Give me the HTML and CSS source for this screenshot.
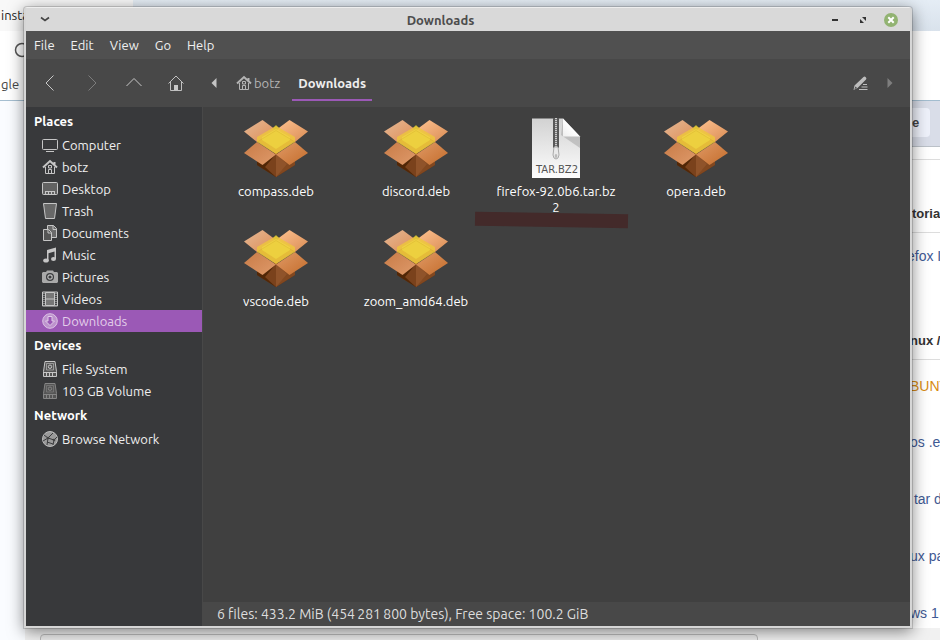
FILE: index.html
```
<!DOCTYPE html>
<html lang="en">
<head>
<meta charset="utf-8">
<title>Downloads</title>
<link rel="stylesheet" href="styles.css">
</head>
<body>
<svg class="defs" aria-hidden="true">
  <defs>
    <linearGradient id="flapA" x1="0" y1="0" x2="1" y2="1"><stop offset="0" stop-color="#e5b894"/><stop offset="1" stop-color="#dd8d57"/></linearGradient>
    <linearGradient id="flapB" x1="0" y1="0" x2="1" y2="1"><stop offset="0" stop-color="#ffc391"/><stop offset="1" stop-color="#d98c54"/></linearGradient>
    <linearGradient id="flapC" x1="0" y1="0" x2="1" y2="1"><stop offset="0" stop-color="#c87b47"/><stop offset="1" stop-color="#df9a6a"/></linearGradient>
    <linearGradient id="flapD" x1="0" y1="0" x2="1" y2="1"><stop offset="0" stop-color="#e09a66"/><stop offset="1" stop-color="#c46d2c"/></linearGradient>
    <linearGradient id="paper" x1="0" y1="0" x2="0" y2="1"><stop offset="0" stop-color="#d2d2d2"/><stop offset="1" stop-color="#fdfdfd"/></linearGradient>
    <linearGradient id="fold" x1="1" y1="0" x2="0" y2="1"><stop offset="0" stop-color="#a8a8a8"/><stop offset=".5" stop-color="#ffffff"/><stop offset="1" stop-color="#eeeeee"/></linearGradient>
  </defs>
  <symbol id="house" viewBox="0 0 16 16"><path d="M1 8.500 8 2l7 6.500M12.500 3v2.500" fill="none" stroke="currentColor" stroke-width="2"/><path d="M3.500 8v6.500h9V8M6.500 14.500v-4h3v4M6.500 6.500h3v2.500h-3z" fill="none" stroke="currentColor"/></symbol>
  <symbol id="drive" viewBox="0 0 16 16"><path d="M3 .5h10l1.500 10v5h-13v-5z" fill="#555" stroke="currentColor"/><path d="M1.500 11.500h13M4.500 12v3M7.500 12v3M10.500 12v3" fill="none" stroke="currentColor"/><path d="M4.500 2.500h7v6.500h-7z" fill="none" stroke="currentColor" opacity=".6"/><circle cx="8" cy="5.700" r="1.700" fill="none" stroke="currentColor"/></symbol>
  <symbol id="package" viewBox="0 -1 64 60">
    <path d="M13 34h38v12L32 58 13 46z" fill="#6c3512"/>
    <path d="M13 34l19 1v23L13 46z" fill="#512707"/><path d="M32 35 21 48l11 10z" fill="#7a421c"/><path d="M32 35l19-1v12L32 58z" fill="#824820"/><path d="M32 35l11 10-11 13z" fill="#8f532a"/>
    <path d="M13 22 32 10l19 12-19 13z" fill="#c08b38"/>
    <path d="M0 12.500 18.500 1 32 11 13 23z" fill="url(#flapA)"/>
    <path d="M32 11 45.500 1 64 12.500 51 23z" fill="url(#flapB)"/>
    <path d="M0 34 13 23l19 12.500L18.500 46z" fill="url(#flapC)"/>
    <path d="M64 34 51 23 32 35.500 45.500 46z" fill="url(#flapD)"/>
    <path d="M29 9l3-3 3 3-3 3z" fill="#b5ae31"/>
    <path d="M13 18 32 7l19 11v5L32 35 13 23z" fill="#eec83a" opacity=".8"/>
    <path d="M18 18 32 10l14 8v3l-14 9-14-9z" fill="#efd742" opacity=".75"/>
    <path d="M13 23 32 11.500 51 23" fill="none" stroke="#d5a52d" opacity=".35"/>
  </symbol>
</svg>

<div class="page">
  <div class="tabstrip"><span class="tab">insta</span></div>
  <div class="columns">
    <section class="left">
      <div class="addr"><svg width="16" height="16" viewBox="0 0 16 16"><circle cx="8" cy="8" r="6.500" fill="none" stroke="#555" stroke-width="1.500"/></svg></div>
      <div class="bookmarks">gle</div>
    </section>
    <section class="right">
      <div class="blank"></div>
      <div class="band"><button class="chip" type="button">e</button></div>
      <div class="rule"></div>
      <h2 class="first">toria</h2>
      <a href="#" class="top">efox I</a>
      <h2 class="second">nux /</h2>
      <a href="#" class="orange">BUNT</a>
      <a href="#">os .e</a>
      <a href="#">&nbsp;tar d</a>
      <a href="#">ux pa</a>
      <a href="#">ws 1</a>
    </section>
  </div>
  <div class="lower"><div class="panel"></div></div>
</div>

<main class="window">
  <header class="titlebar">
    <button class="wmenu" type="button" aria-label="Window menu"><svg width="10" height="8" viewBox="0 0 10 8"><path d="M1 1.500 5 4.500l4-3" fill="none" stroke="#444" stroke-width="1.600"/></svg></button>
    <h1>Downloads</h1>
    <button type="button" aria-label="Minimize"><svg width="8" height="8" viewBox="0 0 8 8"><path d="M1 3h6v2H1z" fill="#333"/></svg></button>
    <button type="button" aria-label="Maximize"><svg width="8" height="8" viewBox="0 0 8 8"><path d="M3 1h4v4zM1 3l4 4H1z" fill="#333"/></svg></button>
    <button type="button" aria-label="Close"><svg width="14" height="14" viewBox="0 0 14 14"><circle cx="7" cy="7" r="7" fill="#92b372"/><path d="M4.300 4.300l5.400 5.400M9.700 4.300 4.300 9.700" stroke="#fff" stroke-width="2"/></svg></button>
  </header>
  <nav class="menubar">
    <button type="button">File</button><button type="button">Edit</button><button type="button">View</button><button type="button">Go</button><button type="button">Help</button>
  </nav>
  <div class="toolbar">
    <button class="tool" type="button" aria-label="Back"><svg width="18" height="18" viewBox="0 0 18 18"><path d="M12.500 1.500 5 9l7.500 7.500" fill="none" stroke="#c8c8c8"/></svg></button>
    <button class="tool" type="button" aria-label="Forward"><svg width="18" height="18" viewBox="0 0 18 18"><path d="M5.500 1.500 13 9l-7.500 7.500" fill="none" stroke="#7d7d7d"/></svg></button>
    <button class="tool" type="button" aria-label="Up"><svg width="18" height="18" viewBox="0 0 18 18"><path d="M1.500 12 9 4.500l7.500 7.500" fill="none" stroke="#c8c8c8"/></svg></button>
    <button class="tool" type="button" aria-label="Home"><svg width="16" height="16" viewBox="0 0 16 16"><path d="M.5 8.500 8 1l7.500 7.500M2.500 7v8.500h11V7" fill="none" stroke="#c0c0c0"/><path d="M6 15v-5h4v5z" fill="#c8c8c8"/></svg></button>
    <button class="step" type="button" aria-label="Previous folders"><svg width="6" height="10" viewBox="0 0 6 10"><path d="M5.500 0v10L.5 5z" fill="#c4c4c4"/></svg></button>
    <button class="crumb" type="button"><svg width="16" height="16"><use href="#house"/></svg>botz</button>
    <button class="crumb current" type="button">Downloads</button>
    <span class="spring"></span>
    <button class="tool" type="button" aria-label="Edit path"><svg width="15" height="15" viewBox="0 0 15 15"><path d="M.5 14l1-4.500L10.500 1q1-1 2.300.2 1.200 1.300.2 2.300L4.500 12z" fill="#bdbdbd"/><path d="M1.500 13l1-2.500L4 12z" fill="#484848"/><path d="M10 8.500h4M8.500 11h6M6 13.500h8.500" stroke="#bdbdbd"/></svg></button>
    <button class="next" type="button" aria-label="Next folders"><svg width="6" height="10" viewBox="0 0 6 10"><path d="M.5 0v10l5-5z" fill="#7e7e7e"/></svg></button>
  </div>
  <div class="body">
    <aside class="sidebar">
      <h2>Places</h2>
      <a href="#"><svg viewBox="0 0 16 16"><rect x=".5" y="2.500" width="15" height="10" rx="1" fill="none" stroke="currentColor"/><path d="M4 14.500h8" stroke="currentColor"/></svg>Computer</a>
      <a href="#"><svg viewBox="0 0 16 16"><use href="#house"/></svg>botz</a>
      <a href="#"><svg viewBox="0 0 16 16"><rect x=".5" y="1.500" width="15" height="12" rx="1" fill="#626262" stroke="currentColor"/><path d="M3 10.500h10M3.500 13v-2M6.500 13v-2M9.500 13v-2M12.500 13v-2" stroke="currentColor"/></svg>Desktop</a>
      <a href="#"><svg viewBox="0 0 16 16"><path d="M1.500.5h13l-2 15h-9z" fill="#686868" stroke="currentColor"/></svg>Trash</a>
      <a href="#"><svg viewBox="0 0 16 16"><path d="M5.500.5h6l3 3v9h-9z" fill="#6b6b6b" stroke="currentColor"/><path d="M11 .5v4h4" fill="none" stroke="currentColor"/><path d="M1.500 4.500h5l3 3v8h-8z" fill="#555" stroke="currentColor"/><path d="M6 4.500V8h3.500" fill="none" stroke="currentColor"/></svg>Documents</a>
      <a href="#"><svg viewBox="0 0 16 16"><path d="M5 3 14 .5V12h-1.500V4.500l-6 1.700V14H5z" fill="currentColor"/><ellipse cx="4" cy="13.500" rx="2.800" ry="2" fill="currentColor"/><ellipse cx="11.500" cy="12" rx="2.500" ry="2" fill="currentColor"/></svg>Music</a>
      <a href="#"><svg viewBox="0 0 16 16"><path d="M1 3h3l1-1.500h6L12 3h3l1 1v9l-1 1H1l-1-1V4z" fill="#a9a9a9"/><circle cx="8" cy="8" r="4" fill="#3b3c3e"/><circle cx="8" cy="8" r="2.200" fill="none" stroke="#bcbcbc" stroke-width="1.200"/></svg>Pictures</a>
      <a href="#"><svg viewBox="0 0 16 16"><path d="M.5 1h15v14H.5z" fill="#454648" stroke="currentColor"/><path d="M3.500 1.500h9v13h-9z" fill="#777" stroke="currentColor"/><path d="M3.500 8h9" stroke="currentColor"/><path d="M2 2v13M14 2v13" stroke="currentColor" stroke-dasharray="1 1"/></svg>Videos</a>
      <a href="#" class="selected"><svg viewBox="0 0 16 16"><circle cx="8" cy="8" r="7.300" fill="#bd93cd" stroke="#dcc3e5"/><path d="M6 3.500h4V8h2.500L8 12.500 3.500 8H6z" fill="#9b59b6" stroke="#e2cdea"/></svg>Downloads</a>
      <h2>Devices</h2>
      <a href="#"><svg viewBox="0 0 16 16"><use href="#drive"/></svg>File System</a>
      <a href="#"><svg class="dim" viewBox="0 0 16 16"><use href="#drive"/></svg>103 GB Volume</a>
      <h2>Network</h2>
      <a href="#"><svg viewBox="0 0 16 16"><circle cx="8" cy="8" r="7.500" fill="#9a9a9a" stroke="#bbb"/><path d="M2 4l4 3 5-5M6 7l-1 7M6 7l6 2 3-3M12 9l-1 5M1 10l5-3M5 11l6 2" fill="none" stroke="#3b3c3e"/><circle cx="6" cy="7" r="1.300" fill="#444"/><circle cx="12" cy="9" r="1.300" fill="#444"/></svg>Browse Network</a>
    </aside>
    <section class="content">
      <div class="files">
        <figure><svg class="pic"><use href="#package"/></svg><figcaption>compass.deb</figcaption></figure>
        <figure><svg class="pic"><use href="#package"/></svg><figcaption>discord.deb</figcaption></figure>
        <figure class="marked"><svg class="pic" viewBox="0 0 64 60">
          <path d="M8 .5h31l17 18V60H8z" fill="url(#paper)"/><path d="M39 .5l17 18V30L37 17z" fill="#999" opacity=".45"/><path d="M39 .5l17 18H39z" fill="url(#fold)"/>
          <path d="M29 0h6v30h-6z" fill="#777"/><path d="M30 0v30M34 0v30" stroke="#3a3a3a"/><path d="M32 0v30" stroke="#ccc" stroke-width="2" stroke-dasharray="1 1"/>
          <path d="M30 29h4l1 8q-.5 4-3 4t-3-4z" fill="#e9e9e9" stroke="#aaa"/><ellipse cx="32" cy="38" rx="1.300" ry="2" fill="#bbb"/>
          <text x="33" y="55" class="ext">TAR.BZ2</text></svg><figcaption>firefox-92.0b6.tar.bz<br>2</figcaption></figure>
        <figure><svg class="pic"><use href="#package"/></svg><figcaption>opera.deb</figcaption></figure>
        <figure><svg class="pic"><use href="#package"/></svg><figcaption>vscode.deb</figcaption></figure>
        <figure><svg class="pic"><use href="#package"/></svg><figcaption>zoom_amd64.deb</figcaption></figure>
      </div>
      <footer class="status">6 files: 433.2 MiB (454&#8201;281&#8201;800 bytes), Free space: 100.2 GiB</footer>
    </section>
  </div>
</main>
</body>
</html>
```
FILE: styles.css
```
* { box-sizing: border-box; }
body {
  margin: 0;
  height: 100vh;
  overflow: hidden;
  position: relative;
  background: #fff;
  color: #f0f0f0;
  font: 13px/16px Ubuntu, "Noto Sans", sans-serif;
}
button { margin: 0; padding: 0; border: 0; background: none; color: inherit; font: inherit; }
a { color: inherit; text-decoration: none; }
h1, h2, figure { margin: 0; font-size: inherit; }
svg { display: block; flex: none; }
.defs { position: absolute; width: 0; height: 0; }

/* Browser page behind the file manager */
.page { height: 100%; display: flex; flex-direction: column; }
.tabstrip { height: 31px; flex: none; display: flex; background: linear-gradient(#e5edf5, #d9e2ec); }
.tab { width: 133px; background: #f8f8f8; color: #222; line-height: 30px; white-space: nowrap; padding-left: 1px; }
.columns { flex: 1; display: flex; justify-content: space-between; min-height: 0; }
.left { width: 25px; background: #fafcff; overflow: hidden; }
.addr { height: 38px; padding: 11px 0 0 14px; background: #fff; }
.bookmarks { height: 32px; line-height: 30px; background: #fff; color: #444; border-bottom: 1px solid #a6bfd1; text-indent: 1px; }
.right {
  width: 33px;
  overflow: hidden;
  white-space: nowrap;
  color: #333;
  font: 14px/20px "Liberation Sans", sans-serif;
  display: flex;
  flex-direction: column;
}
.right > * { flex: none; }
.blank { height: 69px; }
.band { height: 47px; background: #d9dde8; border-top: 1px solid #a3bdcf; border-bottom: 1px solid #bbc1c8; padding-top: 7px; }
.chip { width: 23px; height: 29px; border-radius: 0 4px 4px 0; background: #eef1fa; font-weight: 700; font-size: 13px; color: #444; text-align: left; padding-left: 5px; }
.rule { height: 13px; border-bottom: 1px solid #ddd; }
.right h2 { font-size: 13px; line-height: 18px; border-bottom: 1px solid #ddd; }
.right .first { height: 73px; padding: 45px 0 0 5px; }
.right .second { height: 93px; padding: 65px 0 0 3px; }
.right a { height: 57px; padding: 17px 0 0 3px; color: #3f5a94; }
.right .top { height: 34px; padding: 13px 0 0; }
.right .orange { color: #d88b12; height: 55px; padding-top: 16px; margin-bottom: 0; }
.lower { height: 12px; flex: none; padding: 6px 182px 0 15px; border-left: 25px solid #fafcff; background: #f1f1f1; }
.panel { height: 10px; border: 1px solid #bbb; border-radius: 4px 4px 0 0; background: #eaeaea; }

/* File manager window */
.window {
  position: absolute;
  inset: 7px 28px 12px 24px;
  display: flex;
  flex-direction: column;
  background: #404040;
  border: 2px solid #d6d6d6;
  border-top: 1px solid #eee;
  border-radius: 3px 3px 0 0;
  box-shadow: 0 0 0 1px rgba(0, 0, 0, .15), 0 3px 16px rgba(0, 0, 0, .5);
}
.titlebar { height: 23px; flex: none; display: flex; align-items: center; padding: 0 5px 0 4px; background: #d9d9d9; color: #4d4d4d; }
.titlebar button { width: 28px; height: 22px; display: grid; place-items: center; }
.titlebar .wmenu { width: 30px; }
.titlebar h1 { flex: 1; text-align: center; font-weight: 600; }
.menubar { height: 28px; flex: none; display: flex; background: #505050; }
.menubar button { padding: 0 8px; }
.toolbar { height: 48px; flex: none; display: flex; padding: 0 11px 0 3px; background: #484848; }
.toolbar button { display: flex; align-items: center; justify-content: center; }
.tool { width: 42px; }
.step { width: 34px; }
.next { width: 18px; }
.toolbar .crumb { gap: 2px; margin: 6px 0; height: 36px; padding: 0 12px 0 5px; color: #b4b4b4; }
.toolbar .current { padding: 2px 6px 0; border-bottom: 2px solid #9b59b6; color: #eee; font-weight: 700; }
.spring { flex: 1; }
.body { flex: 1; min-height: 0; display: flex; }
.sidebar { width: 177px; flex: none; padding-top: 1px; background: #38393b; border-right: 1px solid #484848; }
.sidebar h2 { padding-left: 8px; line-height: 26px; color: #fff; font-weight: 700; }
.sidebar a { height: 22px; display: flex; align-items: center; gap: 4px; padding-left: 16px; }
.sidebar svg { width: 16px; height: 16px; color: #c6c6c6; }
.sidebar .dim { color: #858585; }
.sidebar .selected { background: #9b59b6; color: #e3cfea; }
.content { flex: 1; min-width: 0; display: flex; flex-direction: column; }
.files { flex: 1; display: grid; grid-template-columns: repeat(auto-fill, 140px); grid-auto-rows: 110px; align-content: start; padding: 11px 84px 0 3px; }
.files figure { display: flex; flex-direction: column; align-items: center; gap: 5px; text-align: center; color: #fff; }
.pic { width: 64px; height: 60px; }
.ext { font: 10px "DejaVu Sans", sans-serif; fill: #555; text-anchor: middle; }
.marked { position: relative; }
.marked::after { content: ""; position: absolute; left: -11px; top: 95px; width: 153px; height: 14px; background: #432a2a; transform: rotate(1deg); }
.status { height: 24px; flex: none; padding-left: 14px; background: #484848; font-size: 14px; line-height: 24px; color: #ddd; }
```
